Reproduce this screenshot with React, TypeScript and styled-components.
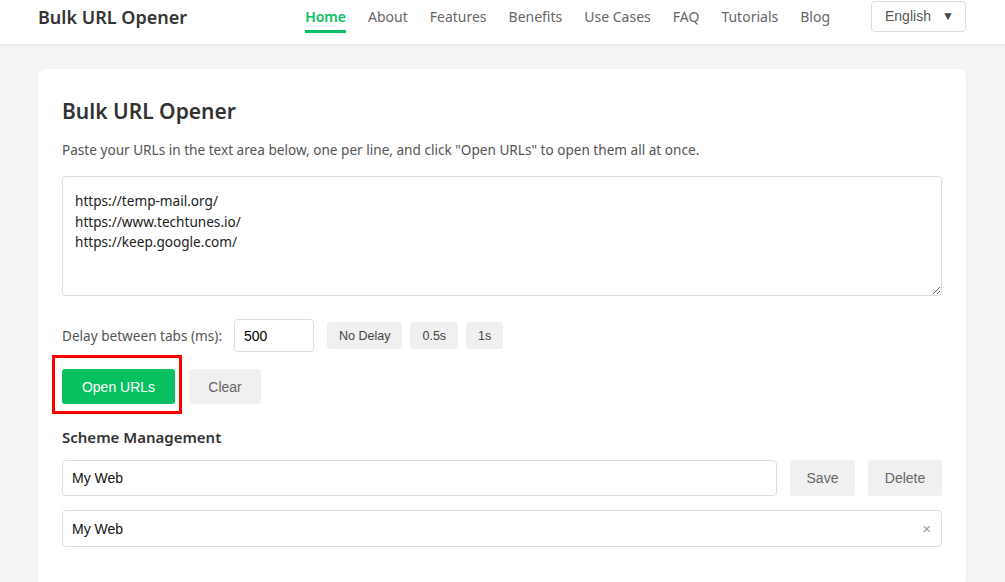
import React from "react";
import styled, { createGlobalStyle } from "styled-components";

const Global = createGlobalStyle`
  html, body { margin: 0; padding: 0; background: #f5f5f5; }
  body { font-family: "Noto Sans", "Open Sans", sans-serif; color: #333; }
  * { box-sizing: border-box; }
`;

const Header = styled.header`
  height: 44px;
  background: #fff;
  box-shadow: 0 1px 4px rgba(0,0,0,0.08);
  display: flex;
  align-items: flex-start;
  padding: 0 39px 0 38px;
`;

const Logo = styled.div`
  font-size: 18px;
  font-weight: 600;
  color: #333;
  flex: 1;
  line-height: 24px;
  margin-top: 5px;
`;

const Nav = styled.nav`
  display: flex;
  align-items: flex-start;
  gap: 22px;
  margin-right: 41px;
`;

const NavLink = styled.a<{ $active?: boolean }>`
  font-size: 14px;
  line-height: 20px;
  color: ${(p) => (p.$active ? "#07c160" : "#666")};
  font-weight: ${(p) => (p.$active ? 600 : 400)};
  text-decoration: none;
  padding: 7px 0 3px;
  border-bottom: 3px solid ${(p) => (p.$active ? "#07c160" : "transparent")};
`;

const LangSelect = styled.div`
  width: 95px;
  height: 31px;
  margin-top: 1px;
  border: 1px solid #ddd;
  border-radius: 4px;
  display: flex;
  align-items: center;
  padding-left: 13px;
  padding-bottom: 1px;
  gap: 11px;
  font-family: "Liberation Sans", Arial, sans-serif;
  font-size: 14px;
  color: #555;
`;

const Caret = styled.span`
  font-size: 12px;
  color: #444;
`;

const Card = styled.main`
  margin: 25px 39px 0 38px;
  background: #fff;
  border-radius: 8px;
  padding: 24px 24px 40px;
  box-shadow: 0 1px 3px rgba(0,0,0,0.04);
`;

const Title = styled.h1`
  margin: 0;
  font-size: 21px;
  font-weight: 600;
  line-height: 36px;
  color: #333;
`;

const Desc = styled.p`
  margin: 11px 0 16px;
  font-size: 13.6px;
  line-height: 20px;
  color: #555;
`;

const UrlArea = styled.textarea`
  display: block;
  width: 100%;
  height: 120px;
  border: 1px solid #ddd;
  border-radius: 4px;
  padding: 14px 12px;
  font-family: "Noto Sans", "Open Sans", sans-serif;
  font-size: 13.6px;
  line-height: 20.5px;
  color: #222;
  resize: vertical;
  outline: none;
`;

const DelayRow = styled.div`
  display: flex;
  align-items: center;
  margin-top: 23px;
`;

const Label = styled.label`
  font-size: 13.6px;
  color: #555;
  margin-right: 12px;
`;

const DelayInput = styled.input`
  width: 80px;
  height: 33px;
  border: 1px solid #ddd;
  border-radius: 4px;
  padding: 0 9px;
  font-family: "Liberation Sans", Arial, sans-serif;
  font-size: 14px;
  color: #000;
  margin-right: 13px;
  outline: none;
`;

const Chips = styled.div`
  display: flex;
  gap: 8px;
`;

const Chip = styled.button`
  height: 27px;
  padding: 0 12px;
  border: none;
  border-radius: 3px;
  background: #f0f0f0;
  font-family: "Liberation Sans", Arial, sans-serif;
  font-size: 12.5px;
  color: #444;
`;

const ActionRow = styled.div`
  display: flex;
  gap: 14px;
  margin-top: 17px;
`;

const Button = styled.button<{ $primary?: boolean; $marked?: boolean; $w?: number }>`
  position: relative;
  height: 35px;
  width: ${(p) => (p.$w ? `${p.$w}px` : "auto")};
  padding: 0;
  border: none;
  border-radius: 3px;
  background: ${(p) => (p.$primary ? "#07c160" : "#f0f0f0")};
  color: ${(p) => (p.$primary ? "#fff" : "#666")};
  font-family: "Liberation Sans", Arial, sans-serif;
  font-size: 14px;
  ${(p) =>
    p.$marked &&
    `&::after {
      content: "";
      position: absolute;
      left: -10px;
      right: -7px;
      top: -14px;
      bottom: -10px;
      border: 3px solid #ff0000;
      pointer-events: none;
    }`}
`;

const SectionTitle = styled.h2`
  margin: 22px 0 12px;
  font-size: 15px;
  font-weight: 600;
  line-height: 22px;
  color: #333;
`;

const SchemeRow = styled.div`
  display: flex;
  gap: 13px;
`;

const TextInput = styled.input`
  flex: 1;
  height: 36px;
  border: 1px solid #ddd;
  border-radius: 4px;
  padding: 0 9px;
  font-family: "Liberation Sans", Arial, sans-serif;
  font-size: 14px;
  color: #111;
  outline: none;
`;

const SideButton = styled(Button)`
  height: 36px;
`;

const Select = styled.div`
  margin-top: 14px;
  height: 37px;
  border: 1px solid #ddd;
  border-radius: 4px;
  display: flex;
  align-items: center;
  justify-content: space-between;
  padding: 0 10px 0 9px;
  font-family: "Liberation Sans", Arial, sans-serif;
  font-size: 14px;
  color: #111;
`;

const Clear = styled.span`
  color: #999;
  font-size: 15px;
`;

const navItems = ["Home", "About", "Features", "Benefits", "Use Cases", "FAQ", "Tutorials", "Blog"];

export default function App() {
  return (
    <>
      <Global />
      <Header>
        <Logo>Bulk URL Opener</Logo>
        <Nav>
          {navItems.map((n, i) => (
            <NavLink key={n} $active={i === 0}>
              {n}
            </NavLink>
          ))}
        </Nav>
        <LangSelect>
          English <Caret>▼</Caret>
        </LangSelect>
      </Header>
      <Card>
        <Title>Bulk URL Opener</Title>
        <Desc>
          Paste your URLs in the text area below, one per line, and click "Open URLs" to open them all at once.
        </Desc>
        <UrlArea
          defaultValue={"https://temp-mail.org/\nhttps://www.techtunes.io/\nhttps://keep.google.com/"}
        />
        <DelayRow>
          <Label>Delay between tabs (ms):</Label>
          <DelayInput defaultValue="500" />
          <Chips>
            <Chip>No Delay</Chip>
            <Chip>0.5s</Chip>
            <Chip>1s</Chip>
          </Chips>
        </DelayRow>
        <ActionRow>
          <Button $primary $marked $w={113}>
            Open URLs
          </Button>
          <Button $w={72}>Clear</Button>
        </ActionRow>
        <SectionTitle>Scheme Management</SectionTitle>
        <SchemeRow>
          <TextInput defaultValue="My Web" />
          <SideButton $w={65}>Save</SideButton>
          <SideButton $w={74}>Delete</SideButton>
        </SchemeRow>
        <Select>
          <span>My Web</span>
          <Clear>×</Clear>
        </Select>
      </Card>
    </>
  );
}
